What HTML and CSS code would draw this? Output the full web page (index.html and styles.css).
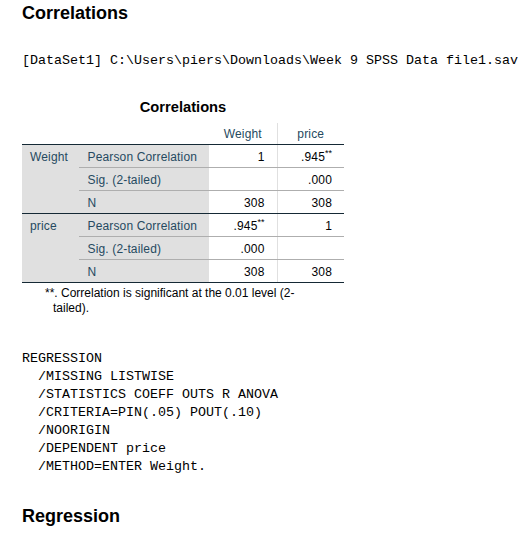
FILE: index.html
```html
<!DOCTYPE html>
<html>
<head>
<meta charset="utf-8">
<link rel="stylesheet" href="styles.css">
</head>
<body>
<div class="page">
  <h1 class="heading">Correlations</h1>
  <pre class="syntax dataset">[DataSet1] C:\Users\piers\Downloads\Week 9 SPSS Data file1.sav</pre>
  <div class="output-table">
    <table class="corr">
      <caption>Correlations</caption>
      <colgroup>
        <col class="c1"><col class="c2"><col class="c3"><col class="c4">
      </colgroup>
      <thead>
        <tr>
          <th class="corner"></th>
          <th class="corner"></th>
          <th class="colhead sep">Weight</th>
          <th class="colhead">price</th>
        </tr>
      </thead>
      <tbody>
        <tr>
          <th class="rowgroup group-end" rowspan="3">Weight</th>
          <th class="rowlabel">Pearson Correlation</th>
          <td class="num sep">1</td>
          <td class="num">.945<sup>**</sup></td>
        </tr>
        <tr>
          <th class="rowlabel">Sig. (2-tailed)</th>
          <td class="num sep"></td>
          <td class="num">.000</td>
        </tr>
        <tr class="last-in-group">
          <th class="rowlabel">N</th>
          <td class="num sep">308</td>
          <td class="num">308</td>
        </tr>
        <tr>
          <th class="rowgroup table-end" rowspan="3">price</th>
          <th class="rowlabel">Pearson Correlation</th>
          <td class="num sep">.945<sup>**</sup></td>
          <td class="num">1</td>
        </tr>
        <tr>
          <th class="rowlabel">Sig. (2-tailed)</th>
          <td class="num sep">.000</td>
          <td class="num"></td>
        </tr>
        <tr class="last-row">
          <th class="rowlabel">N</th>
          <td class="num sep">308</td>
          <td class="num">308</td>
        </tr>
      </tbody>
    </table>
    <p class="footnote">**. Correlation is significant at the 0.01 level (2-<br>tailed).</p>
  </div>
  <pre class="syntax command">REGRESSION
  /MISSING LISTWISE
  /STATISTICS COEFF OUTS R ANOVA
  /CRITERIA=PIN(.05) POUT(.10)
  /NOORIGIN
  /DEPENDENT price
  /METHOD=ENTER Weight.</pre>
  <h1 class="heading regression">Regression</h1>
</div>
</body>
</html>
```

FILE: styles.css
```css
html, body {
  margin: 0;
  padding: 0;
  background: #ffffff;
}

.page {
  padding: 2px 0 0 22px;
  font-family: "Liberation Sans", Arial, sans-serif;
  color: #000000;
}

.heading {
  margin: 0;
  font-size: 18px;
  line-height: 22px;
  font-weight: bold;
  color: #000000;
}

.syntax {
  margin: 0;
  font-family: "Liberation Mono", "Courier New", monospace;
  font-size: 13.33px;
  line-height: 18px;
  color: #000000;
}

.dataset {
  margin-top: 28px;
}

.output-table {
  margin-top: 28px;
}

.corr {
  border-collapse: collapse;
  table-layout: fixed;
  width: 322px;
  font-size: 12px;
  letter-spacing: 0.15px;
}

.corr caption {
  font-size: 14.7px;
  font-weight: bold;
  line-height: 18px;
  letter-spacing: 0;
  color: #000000;
  padding-bottom: 7px;
  text-align: center;
}

.corr col.c1 { width: 57px; }
.corr col.c2 { width: 130px; }
.corr col.c3 { width: 68px; }
.corr col.c4 { width: 67px; }

.corr th,
.corr td {
  padding: 5px 8px 3px 8px;
  line-height: 14px;
  font-weight: normal;
  white-space: nowrap;
  vertical-align: middle;
}

.corr thead th {
  padding: 4px 8px 3px 8px;
  border-bottom: 1px solid #152935;
  color: #264a60;
  text-align: center;
}

.corr thead th.colhead.sep {
  border-right: 1px solid #e0e0e0;
}

.corr .rowgroup {
  background: #e0e0e0;
  color: #264a60;
  text-align: left;
  vertical-align: top;
}

.corr .rowlabel {
  background: #e0e0e0;
  color: #264a60;
  text-align: left;
  padding-left: 8.5px;
  border-bottom: 1px solid #aeaeae;
}

.corr td.num {
  color: #010205;
  text-align: right;
  padding-right: 12px;
  border-bottom: 1px solid #aeaeae;
}

.corr td.num.sep {
  border-right: 1px solid #e0e0e0;
}

.corr tr.last-in-group .rowlabel,
.corr tr.last-in-group td,
.corr .rowgroup.group-end {
  border-bottom: 1px solid #152935;
}

.corr tr.last-row .rowlabel,
.corr tr.last-row td,
.corr .rowgroup.table-end {
  border-bottom: 1px solid #152935;
}

.corr sup {
  font-size: 9px;
  line-height: 0;
  vertical-align: 5px;
  letter-spacing: 0;
}

.footnote {
  margin: 3px 0 0 0;
  padding-left: 31px;
  text-indent: -8px;
  font-size: 12px;
  line-height: 15px;
  color: #010205;
}

.command {
  margin-top: 34px;
}

.regression {
  margin-top: 29px;
}
```
